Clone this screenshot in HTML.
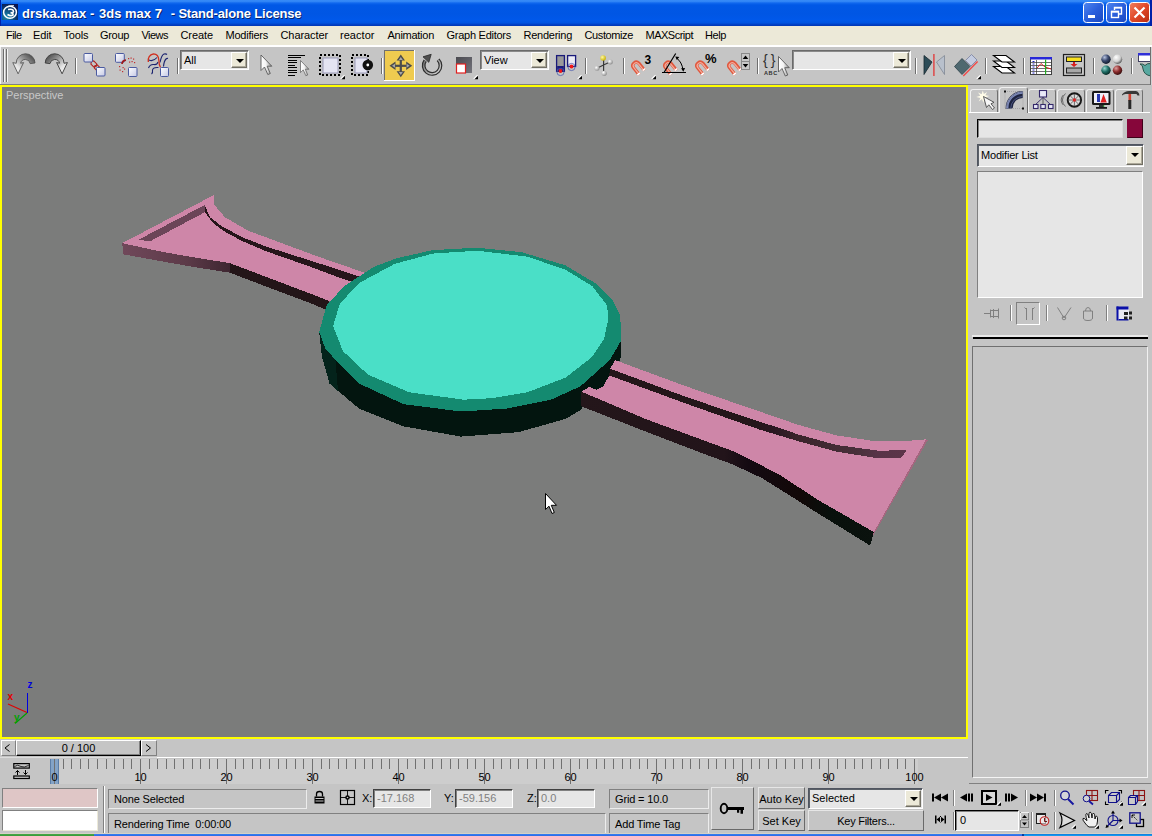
<!DOCTYPE html>
<html><head><meta charset="utf-8"><title>drska.max - 3ds max 7</title>
<style>
*{box-sizing:border-box;margin:0;padding:0}
html,body{width:1152px;height:836px;overflow:hidden;background:#c5c5c5;font-family:"Liberation Sans",sans-serif;font-size:11px;color:#000}
.abs{position:absolute}
#title{position:absolute;left:0;top:0;width:1152px;height:26px;background:linear-gradient(to bottom,#2f84f5 0,#3a8ef8 1px,#1068ee 3px,#0058e6 5px,#0056e4 14px,#0058ea 20px,#0054e0 23px,#0044cc 24px,#0036b4 26px)}
#title .t{position:absolute;left:22px;top:6px;font-weight:bold;font-size:13px;color:#fff;white-space:pre;text-shadow:1px 1px 0 #0a246a}
#menu{position:absolute;left:0;top:26px;width:1152px;height:19px;background:#ece9d8}
#menu span{position:absolute;top:3px;white-space:nowrap;font-size:11px}
#toolbar{position:absolute;left:0;top:45px;width:1152px;height:40px;background:#c5c5c5;border-top:2px solid #fff}
#vp{position:absolute;left:0;top:85px;width:968px;height:654px;background:#7b7c7b;border:2px solid #ffff00}
#vp .lbl{position:absolute;left:4px;top:2px;color:#c8c8c8;font-size:11px}
#panel{position:absolute;left:969px;top:85px;width:183px;height:700px;background:#c5c5c5}
.dd{position:absolute;height:20px;background:#e6e6e6;border:1px solid;border-color:#6a6a6a #fff #fff #6a6a6a;box-shadow:inset 1px 1px 0 #8a8a8a}
.dd .tx{position:absolute;left:3px;top:3px;font-size:11px;white-space:nowrap}
.dd .ar{position:absolute;right:1px;top:1px;bottom:1px;width:16px;background:#ece9d8;border:1px solid;border-color:#fff #716f64 #716f64 #fff;box-shadow:inset -1px -1px 0 #aca899}
.dd .ar:after{content:"";position:absolute;left:4px;top:6px;border:4px solid transparent;border-top:4px solid #000;border-bottom:0}
.tt{position:absolute;white-space:nowrap;line-height:1}
.fld{position:absolute;background:#c5c5c5;border:1px solid;border-color:#808080 #ececec #ececec #808080}
.fld .tx{position:absolute;left:5px;top:3px;font-size:11px;white-space:nowrap;letter-spacing:-0.15px}
.inp{position:absolute;background:#e6e6e6;border:1px solid;border-color:#404040 #fff #fff #404040;box-shadow:inset 1px 1px 0 #808080}
.inp .tx{position:absolute;left:3px;top:2px;font-size:11px;color:#808080;white-space:nowrap}
.btn{position:absolute;background:#c5c5c5;border:1px solid;border-color:#e6e6e6 #6a6a6a #6a6a6a #e6e6e6;text-align:center;font-size:11px;white-space:nowrap}
.tab{position:absolute;top:89px;width:28px;height:23px;border-left:1px solid #f0f0f0;border-top:1px solid #f0f0f0;border-right:1px solid #707070;border-radius:3px 3px 0 0;background:#c5c5c5}
.tab.sel{top:87px;height:26px;width:29px}
</style></head><body>
<div id="title"><div class="t">drska.max - </div><div class="t" style="left:99px">3ds max 7</div><div class="t" style="left:170.8px;letter-spacing:-0.18px">- Stand-alone License</div></div>
<div id="menu">
<span style="left:6px;letter-spacing:-0.56px">File</span><span style="left:33px;letter-spacing:-0.12px">Edit</span><span style="left:63.5px;letter-spacing:-0.14px">Tools</span><span style="left:100px;letter-spacing:-0.32px">Group</span><span style="left:141.5px;letter-spacing:-0.53px">Views</span><span style="left:180.5px;letter-spacing:-0.09px">Create</span><span style="left:225.5px;letter-spacing:-0.24px">Modifiers</span><span style="left:280.5px;letter-spacing:-0.09px">Character</span><span style="left:340px;letter-spacing:0.04px">reactor</span><span style="left:387.5px;letter-spacing:-0.27px">Animation</span><span style="left:446.5px;letter-spacing:-0.26px">Graph Editors</span><span style="left:523.5px;letter-spacing:-0.25px">Rendering</span><span style="left:584.5px;letter-spacing:-0.39px">Customize</span><span style="left:645.5px;letter-spacing:-0.50px">MAXScript</span><span style="left:705px;letter-spacing:-0.41px">Help</span>
</div>
<div id="toolbar"></div>
<div class="dd" style="left:180px;top:50px;width:69px"><div class="tx">All</div><div class="ar"></div></div>
<div class="dd" style="left:480px;top:50px;width:69px"><div class="tx">View</div><div class="ar"></div></div>
<div class="dd" style="left:792px;top:50px;width:119px"><div class="ar"></div></div>
<div class="tt" style="left:644.5px;top:54px;font-weight:bold;font-size:12px">3</div>
<div class="tt" style="left:705px;top:52px;font-weight:bold;font-size:13px">%</div>
<div class="tt" style="left:763px;top:53px;font-size:14px;letter-spacing:3px;color:#303030">{}</div>
<div class="tt" style="left:764px;top:71px;font-size:5.5px;font-weight:bold;letter-spacing:0.6px;color:#303030">ABC</div>
<div id="vp"><div class="lbl">Perspective</div></div>
<div id="panel"></div>
<svg class="abs" style="left:0;top:0" width="1152" height="90" viewBox="0 0 1152 90">
<defs>
<linearGradient id="gArrow" x1="1" y1="0" x2="0" y2="1"><stop offset="0" stop-color="#303030"/><stop offset="0.35" stop-color="#8a8a8a"/><stop offset="0.7" stop-color="#e4e4e4"/><stop offset="1" stop-color="#ffffff"/></linearGradient>
<linearGradient id="gArrowR" x1="0" y1="0" x2="1" y2="1"><stop offset="0" stop-color="#303030"/><stop offset="0.35" stop-color="#8a8a8a"/><stop offset="0.7" stop-color="#e4e4e4"/><stop offset="1" stop-color="#ffffff"/></linearGradient>
<linearGradient id="gSq" x1="0" y1="0" x2="1" y2="1"><stop offset="0" stop-color="#ffffff"/><stop offset="1" stop-color="#c4c8e4"/></linearGradient>
<linearGradient id="gMag" x1="0" y1="0" x2="1" y2="1"><stop offset="0" stop-color="#e8452a"/><stop offset="1" stop-color="#f2a090"/></linearGradient>
<linearGradient id="gCur" x1="0" y1="0" x2="1" y2="0"><stop offset="0" stop-color="#ffffff"/><stop offset="0.45" stop-color="#f4f4f4"/><stop offset="1" stop-color="#8a8a8a"/></linearGradient>
<linearGradient id="gRot" gradientUnits="userSpaceOnUse" x1="423" y1="57" x2="441" y2="75"><stop offset="0" stop-color="#6a6a6a"/><stop offset="0.5" stop-color="#a0a0a0"/><stop offset="1" stop-color="#e0e0e0"/></linearGradient>
<linearGradient id="gScl" x1="0" y1="0" x2="1" y2="1"><stop offset="0" stop-color="#4a4a50"/><stop offset="1" stop-color="#74747c"/></linearGradient>
<radialGradient id="gBall" cx="0.35" cy="0.35" r="0.7"><stop offset="0" stop-color="#ffffff"/><stop offset="1" stop-color="#8c8c8c"/></radialGradient>
<radialGradient id="gBallY" cx="0.35" cy="0.35" r="0.7"><stop offset="0" stop-color="#fff8a0"/><stop offset="1" stop-color="#c8b000"/></radialGradient>
<radialGradient id="gS1" cx="0.35" cy="0.3" r="0.75"><stop offset="0" stop-color="#b8c4e0"/><stop offset="0.5" stop-color="#3c4a70"/><stop offset="1" stop-color="#101828"/></radialGradient>
<radialGradient id="gS2" cx="0.35" cy="0.3" r="0.75"><stop offset="0" stop-color="#ffffff"/><stop offset="0.6" stop-color="#d0d0d0"/><stop offset="1" stop-color="#505050"/></radialGradient>
<radialGradient id="gS3" cx="0.35" cy="0.3" r="0.75"><stop offset="0" stop-color="#9ad8d0"/><stop offset="0.5" stop-color="#207068"/><stop offset="1" stop-color="#062420"/></radialGradient>
<radialGradient id="gS4" cx="0.35" cy="0.3" r="0.75"><stop offset="0" stop-color="#e0a0a0"/><stop offset="0.5" stop-color="#903030"/><stop offset="1" stop-color="#300808"/></radialGradient>
<g id="magnet"><path d="M9.1 14.6 L3.4 7.6 A3.5 3.5 0 0 1 8.8 3.2 L14.5 10.2" fill="none" stroke="#e0583e" stroke-width="3.4"/><path d="M8.6 13.6 L3.9 7.6 A2.9 2.9 0 0 1 8.6 3.9 L13.4 9.8" fill="none" stroke="#f6ac9c" stroke-width="1.2"/><path d="M8.1 13.4 L9.1 14.6 M13.5 9 L14.5 10.2" fill="none" stroke="#ffffff" stroke-width="3.4"/></g>
<g id="fly"><path d="M4 0.200 V3.800 H0.400 Z" fill="#000"/><path d="M-0.300 3.400 L3.500 -0.400" fill="none" stroke="#fff" stroke-width="1.100"/></g>
<g id="cursor"><path d="M0 0 L0 15.5 L3.5 12 L6.8 19.5 L9.3 18.5 L6.2 11.2 L10.8 11.2 Z" fill="url(#gCur)" stroke="#5a5a5a" stroke-width="0.9"/></g>
</defs>
<!-- gripper -->
<rect x="3" y="49" width="1" height="33" fill="#6e6e6e"/><rect x="4" y="49" width="1" height="33" fill="#f4f4f4"/>
<rect x="6" y="49" width="1" height="33" fill="#6e6e6e"/><rect x="7" y="49" width="1" height="33" fill="#f4f4f4"/>
<!-- undo -->
<path d="M18.1 73.8 L12.8 62.6 L16.2 63.3 A9.4 9.4 0 0 1 35 63 L30.2 63.6 A4.9 4.9 0 0 0 20.6 63.2 L23.6 62.6 Z" fill="url(#gArrow)" stroke="#4a4a4a" stroke-width="0.8"/>
<!-- redo -->
<path d="M62.1 73.8 L67.4 62.6 L64 63.3 A9.4 9.4 0 0 0 45.2 63 L50 63.6 A4.9 4.9 0 0 1 59.6 63.2 L56.6 62.6 Z" fill="url(#gArrowR)" stroke="#3a3a3a" stroke-width="0.9"/>
<g fill="#fff" stroke="none">
<rect x="75" y="58" width="1" height="16" fill="#6e6e6e"/><rect x="76" y="58" width="1" height="16"/>
<rect x="177" y="58" width="1" height="16" fill="#6e6e6e"/><rect x="178" y="58" width="1" height="16"/>
<rect x="381" y="58" width="1" height="16" fill="#6e6e6e"/><rect x="382" y="58" width="1" height="16"/>
<rect x="585" y="58" width="1" height="16" fill="#6e6e6e"/><rect x="586" y="58" width="1" height="16"/>
<rect x="623" y="58" width="1" height="16" fill="#6e6e6e"/><rect x="624" y="58" width="1" height="16"/>
<rect x="757" y="58" width="1" height="16" fill="#6e6e6e"/><rect x="758" y="58" width="1" height="16"/>
<rect x="915" y="58" width="1" height="16" fill="#6e6e6e"/><rect x="916" y="58" width="1" height="16"/>
<rect x="985" y="58" width="1" height="16" fill="#6e6e6e"/><rect x="986" y="58" width="1" height="16"/>
<rect x="1023" y="58" width="1" height="16" fill="#6e6e6e"/><rect x="1024" y="58" width="1" height="16"/>
<rect x="1093" y="58" width="1" height="16" fill="#6e6e6e"/><rect x="1094" y="58" width="1" height="16"/>
<rect x="1131" y="58" width="1" height="16" fill="#6e6e6e"/><rect x="1132" y="58" width="1" height="16"/>
</g>
<!-- link -->
<path d="M91.5 61.5 l2.2 -0.6 3 3 -0.6 2.6 -2.4 0.4 -2.8 -2.8 z M95 65.5 l2.2 -0.6 3 3 -0.6 2.6 -2.4 0.4 -2.8 -2.8 z" fill="none" stroke="#b02020" stroke-width="1.1"/>
<rect x="84" y="53.5" width="8.5" height="8.5" rx="1" fill="url(#gSq)" stroke="#4a5aa0" stroke-width="1"/>
<rect x="96.5" y="67.5" width="8.5" height="8.5" rx="1" fill="url(#gSq)" stroke="#4a5aa0" stroke-width="1"/>
<!-- unlink -->
<rect x="115.5" y="53.5" width="8.8" height="8.8" rx="1" fill="url(#gSq)" stroke="#4a5aa0" stroke-width="1"/>
<rect x="128.5" y="67.5" width="8.5" height="9" rx="1" fill="url(#gSq)" stroke="#4a5aa0" stroke-width="1"/>
<path d="M122 64 q0.300 -3.500 4 -3.800" fill="none" stroke="#a01818" stroke-width="1.700"/>
<g fill="#c03030"><rect x="128" y="58" width="1.2" height="1.2"/><rect x="130.5" y="57.5" width="1.2" height="1.2"/><rect x="133" y="58.5" width="1.2" height="1.2"/><rect x="129" y="61.5" width="1.2" height="1.2"/><rect x="131.5" y="61" width="1.2" height="1.2"/><rect x="134" y="62" width="1.2" height="1.2"/><rect x="119" y="66" width="1.2" height="1.2"/><rect x="122.5" y="67" width="1.2" height="1.2"/><rect x="119.5" y="69.5" width="1.2" height="1.2"/><rect x="122" y="71" width="1.2" height="1.2"/><rect x="124" y="68.5" width="1.2" height="1.2"/></g>
<!-- bind space warp -->
<g fill="none" stroke-width="1.100">
<path d="M149 60 Q153 62 157 57.500 M148.500 68 Q150 64 154 64.500 Q157 65 158 62 M151.500 74 Q153 73 152.500 70 Q153 67 158.500 67.500 M160 62.500 Q161.500 55 164 54 Q166 53.500 167 54.500 M163.500 66.500 Q164 61 166 59 Q167 58 168 58.500" stroke="#1c2470"/>
<path d="M148.300 62 Q147.500 55 153.500 53.800 Q158.500 54 158.800 60 Q159 65 160.500 67.500" stroke="#d03020" stroke-width="1.300"/>
</g>
<rect x="160.500" y="67.500" width="8" height="9" rx="1" fill="url(#gSq)" stroke="#4a5aa0" stroke-width="1"/>
<!-- select arrow -->
<use href="#cursor" x="261" y="55"/>
<!-- select by name -->
<g fill="#000" shape-rendering="crispEdges"><rect x="288" y="55" width="17" height="1"/><rect x="288" y="57" width="13" height="1"/><rect x="288" y="60" width="9" height="1"/><rect x="288" y="62" width="9" height="1"/><rect x="288" y="65" width="7" height="1"/><rect x="288" y="67" width="9" height="1"/><rect x="288" y="70" width="9" height="1"/><rect x="288" y="72" width="9" height="1"/><rect x="288" y="75" width="7" height="1"/></g>
<use href="#cursor" x="300.500" y="60.500" transform="translate(300.5 60.500) scale(0.78) translate(-300.5 -60.500)"/>
<!-- rect region -->
<rect x="320" y="55" width="20" height="20" fill="none" stroke="#000" stroke-width="2" stroke-dasharray="2 2" shape-rendering="crispEdges"/>
<rect x="323" y="58" width="15" height="15" fill="#e4e4f2" stroke="#9a9ab8" stroke-width="1"/>
<use href="#fly" x="341" y="75.500"/>
<!-- window crossing -->
<rect x="352" y="55" width="16" height="20" fill="none" stroke="#000" stroke-width="2" stroke-dasharray="2 2" shape-rendering="crispEdges"/>
<rect x="355" y="58" width="12" height="15" fill="#e4e4f2" stroke="#9a9ab8" stroke-width="1"/>
<circle cx="367.800" cy="65" r="5.300" fill="#111"/><circle cx="367.800" cy="65" r="1.400" fill="#fff"/>
<!-- move button -->
<rect x="384" y="50" width="31" height="31" fill="#fff"/><rect x="384" y="50" width="30" height="30" fill="#707070"/><rect x="385" y="51" width="29" height="29" fill="#efcb50"/>
<g fill="#4c4c4c"><rect x="399.700" y="58" width="2.200" height="16"/><rect x="393" y="64.700" width="16" height="2.200"/>
<path d="M400.800 54.500 l4.200 6 h-8.400 z M400.800 77.300 l4.200 -6 h-8.400 z M389.500 65.800 l6 -4.200 v8.400 z M412.200 65.800 l-6 -4.200 v8.400 z"/></g>
<g fill="#a8a8a8"><path d="M400.800 57 l2 3 h-4 z M400.800 75 l2 -3 h-4 z M392 65.800 l3 -2 v4 z M409.600 65.800 l-3 -2 v4 z"/></g>
<!-- rotate -->
<path d="M425.200 60.700 A8.400 8.400 0 1 0 438.100 59.700" fill="none" stroke="#2e2e2e" stroke-width="3.800"/>
<path d="M425.200 60.700 A8.400 8.400 0 1 0 438.100 59.700" fill="none" stroke="url(#gRot)" stroke-width="1.400"/>
<path d="M431.200 54.300 L423 56.800 L428.800 62.300 Z" fill="#505050" stroke="#2a2a2a" stroke-width="0.800"/>
<!-- scale -->
<rect x="456" y="57" width="16" height="16" fill="url(#gScl)"/>
<rect x="456.500" y="64" width="9" height="9" fill="#fff" stroke="#e02020" stroke-width="1.200"/>
<use href="#fly" x="474" y="75.500"/>
<!-- pivot -->
<rect x="556.600" y="55.600" width="7.800" height="15.800" fill="#9a9a9a" stroke="#1a1a7a" stroke-width="1.300"/><rect x="557.200" y="66" width="6.600" height="5.500" fill="#1a1a7a"/>
<circle cx="560.500" cy="72" r="3.600" fill="none" stroke="#5060b0" stroke-width="0.800"/><circle cx="560.500" cy="71" r="1.900" fill="#f01818"/>
<rect x="567.600" y="55.600" width="8" height="10.800" fill="#ececf4" stroke="#1a1a7a" stroke-width="1.300"/>
<circle cx="571.500" cy="67" r="3.600" fill="none" stroke="#5060b0" stroke-width="0.800"/><circle cx="571.500" cy="66.500" r="1.900" fill="#f01818"/>
<use href="#fly" x="578" y="75.500"/>
<!-- manipulate -->
<path d="M603.600 59 V72 M597.500 68 L603.500 65 L610 62" stroke="#3a3a3a" stroke-width="1.200" fill="none"/>
<circle cx="603.100" cy="58" r="2.800" fill="url(#gBallY)"/><circle cx="597" cy="68.300" r="2.500" fill="url(#gBall)"/><circle cx="610.300" cy="61.900" r="2.500" fill="url(#gBall)"/><circle cx="604.200" cy="73.300" r="2.600" fill="url(#gBall)"/>
<!-- magnets -->
<use href="#magnet" x="630" y="60"/><use href="#magnet" x="662" y="60"/><use href="#magnet" x="694" y="60"/><use href="#magnet" x="726" y="60"/>
<use href="#fly" x="652" y="75.500"/>
<!-- angle -->
<path d="M662 72.500 H686 M664 72.500 L675.700 53.500" stroke="#000" stroke-width="1.200" fill="none"/>
<path d="M676.500 58 Q682 62 683 70" stroke="#000" stroke-width="1" fill="none"/><path d="M675.300 56.500 l4 0.500 -2.500 3 z M683.300 71.800 l-2.200 -3.600 4 -0.300 z" fill="#000"/>
<!-- spinner -->
<rect x="741" y="53" width="9" height="17" fill="#8a8a8a"/><rect x="742" y="54" width="7" height="7" fill="#c8c8c8"/><rect x="742" y="62" width="7" height="7" fill="#c8c8c8"/>
<path d="M745.500 55.500 l2.800 3.500 h-5.600 z M745.500 67.500 l2.800 -3.500 h-5.600 z" fill="#000"/>
<!-- named sel cursor -->
<use href="#cursor" x="778.500" y="56.500"/>
<!-- mirror -->
<path d="M924 55.500 V74.500 L932 62 Z" fill="#2c4c58" stroke="#182830" stroke-width="0.800"/>
<path d="M944.500 55.500 V74.500 L936.500 62 Z" fill="#b8c0cc" stroke="#808894" stroke-width="0.800"/>
<rect x="933.200" y="54" width="1.400" height="22" fill="#e04040"/>
<!-- align -->
<path d="M962 58.500 L970 66.500 L962 74.500 L954.500 66.500 Z" fill="#4e6870" stroke="#2c4048" stroke-width="0.800"/>
<path d="M971.500 54.500 L977 60 L971 66 L965.500 60.500 Z" fill="#c4cce0" stroke="#7880a0" stroke-width="0.800"/>
<path d="M963.300 76 L977.600 61.500" stroke="#f04848" stroke-width="1.400"/>
<use href="#fly" x="977" y="75.500"/>
<!-- layers -->
<g fill="#fff" stroke="#000" stroke-width="1.100" stroke-linejoin="miter"><path d="M993.500 66.500 H1006 L1014.500 73 H1002 Z"/><path d="M993.500 61 H1006 L1014.500 67.500 H1002 Z"/><path d="M993.500 55.500 H1006 L1014.500 62 H1002 Z"/></g>
<!-- curve editor -->
<rect x="1030.500" y="57.500" width="21" height="17" fill="#fff" stroke="#404040" stroke-width="1"/>
<rect x="1030" y="57" width="22" height="2.500" fill="#2828d8"/>
<path d="M1036.500 60 V74 M1031 62.500 H1051 M1031 65.500 H1051 M1031 68.500 H1051 M1031 71.500 H1051" stroke="#303030" stroke-width="0.700" fill="none"/>
<path d="M1032.500 61.500 h2 M1032.500 64 h2 M1032.500 67 h2 M1032.500 70 h2 M1032.500 73 h2" stroke="#2020c0" stroke-width="1"/>
<path d="M1037 68 L1041 63.500 L1045 67 L1051 69" stroke="#d02020" stroke-width="1" fill="none"/>
<rect x="1045" y="59.500" width="1.200" height="15" fill="#20b020"/>
<!-- schematic -->
<rect x="1063.500" y="54.500" width="21" height="21" fill="#c8c8c8" stroke="#202020" stroke-width="1.200"/>
<rect x="1066.500" y="57" width="15" height="4.500" fill="#f8e020" stroke="#202020" stroke-width="1"/>
<rect x="1066.500" y="68" width="15" height="5" fill="#a8a8a8" stroke="#202020" stroke-width="1"/>
<path d="M1073 62 h2 v2 h2.500 l-3.500 3 -3.500 -3 h2.500 z" fill="#d82020"/>
<!-- material editor -->
<circle cx="1106" cy="59.200" r="4.700" fill="url(#gS1)"/><circle cx="1117.500" cy="59.200" r="4.700" fill="url(#gS2)"/><circle cx="1106" cy="70.200" r="4.700" fill="url(#gS3)"/><circle cx="1117.500" cy="70.200" r="4.700" fill="url(#gS4)"/>
<!-- render scene -->
<rect x="1138.500" y="53.500" width="14" height="8" fill="#fff" stroke="#404060" stroke-width="1"/><rect x="1138" y="53" width="14" height="2.500" fill="#3030d8"/>
<path d="M1140 64 q3 1 3 5 q1 6 8 7 V63.500 q-4 -0.500 -6 2 q-2 -2 -5 -1.500 z" fill="#58a8a0" stroke="#204840" stroke-width="0.900"/>
</svg>
<svg class="abs" style="left:0;top:0" width="1152" height="836" viewBox="0 0 1152 836" shape-rendering="crispEdges">
<defs><linearGradient id="gSide" x1="0" y1="0" x2="1" y2="0"><stop offset="0" stop-color="#70485a"/><stop offset="0.6" stop-color="#5c3a48"/><stop offset="1" stop-color="#3e2631"/></linearGradient><linearGradient id="gGrv" gradientUnits="userSpaceOnUse" x1="605" y1="0" x2="906" y2="0"><stop offset="0" stop-color="#24161a"/><stop offset="0.5" stop-color="#24161a"/><stop offset="0.56" stop-color="#2a1822"/><stop offset="0.64" stop-color="#3a242b"/><stop offset="0.84" stop-color="#48303a"/><stop offset="0.9" stop-color="#573347"/><stop offset="1" stop-color="#5c3449"/></linearGradient><linearGradient id="gRS" gradientUnits="userSpaceOnUse" x1="575" y1="0" x2="874" y2="0"><stop offset="0" stop-color="#24161a"/><stop offset="0.5" stop-color="#22141a"/><stop offset="0.58" stop-color="#140a12"/><stop offset="0.75" stop-color="#120808"/><stop offset="0.85" stop-color="#08100c"/><stop offset="1" stop-color="#0a120e"/></linearGradient></defs>
<!-- left handle -->
<g>
<polygon fill="url(#gSide)" points="122.2,243.2 162.1,251.8 196.8,257.9 229.8,263.1 229.8,272.7 196.8,267.5 162.1,261.4 123.5,254.4"/>
<polygon fill="#231518" points="229.8,263.1 266.3,277 310,293.5 329,301 329,311 310,303 266.3,286.6 229.8,272.7"/>
<polygon fill="#ce86a8" points="122.2,243.2 213.8,195.1 214.2,204.1 215.9,206.7 224.9,217.2 247.9,230.6 276.6,241.2 314.9,255.5 364.6,272.7 370,275 340,306 329,301 310,293.5 266.3,277 229.8,263.1 196.8,257.9 162.1,251.8"/>
<polygon fill="#6b4558" points="138.6,239.7 204.6,205 205.5,211.9 149.9,241.4"/>
<polygon fill="#26151a" points="204.6,205 205.1,205.8 209.8,217.1 221.1,225.8 241.9,237.1 266.3,246.6 310,260.5 343,271 362,277.5 355,283 343,279 310,266.6 266.3,251.3 241.9,240.9 222.8,230.5 212.4,222.3 205.5,212.8"/>
</g>
<!-- disc side -->
<polygon fill="#03150f" points="319.2,331.8 322,357 329.5,383.5 359,408.6 403.3,426.3 460.9,436.6 518.4,432.2 565.6,418.9 580.4,410 620.5,358 621.1,340.7 470,300"/>
<polygon fill="#04231b" points="319.2,331.8 322,357 329.5,383.5 338,391 335.4,359.9 325.1,348.1"/>
<!-- right handle -->
<g>
<polygon fill="url(#gRS)" points="581.5,391.7 646.6,419.4 704,440.5 732.7,451 761.4,465.4 780,475 817.4,499.6 873.9,532.1 870.1,545.5 817.4,513 780,489.3 761.4,477.8 732.7,464.4 704,453.9 646.6,431.9 580.5,406"/>
<polygon fill="#ce86a8" points="600,357 615,360.1 684.9,385.9 780,418.5 798.3,424.9 836.6,435.4 874.9,441.2 903.6,441.2 926.2,439.3 873.9,532.1 817.4,499.6 780,475 761.4,465.4 732.7,451 704,440.5 646.6,419.4 581.5,391.7 590,386"/>
<polygon fill="url(#gGrv)" points="605,366.8 610.2,368.7 684.9,396.5 760,422 780,428 798.3,434.5 836.6,445 878.7,450.7 906.5,450.2 900.8,458.4 878.7,458.4 836.6,451.7 798.3,441.2 780,435.7 760,429.7 684.9,403.2 609.2,375.4 604,373.5"/>
<polygon fill="#a5667f" points="926.2,439.3 927.6,440.5 872.8,536 870.1,545.5 873.9,532.1"/>
</g>
<!-- disc dark over handle root -->
<polygon fill="#03150f" points="621.1,340.7 620.2,361 615,360.1 610.2,368.7 609.2,375.4 603.5,386 596.8,389.8 589.1,386.9 581.5,391.7 580.5,406 560,400 580.4,386.4 609.9,359.9"/>
<!-- rim -->
<polygon fill="#148a70" points="319.2,331.8 326.6,305.3 344.3,286.1 373.8,266.9 397.4,258 432.8,250.1 477.1,247.7 521.4,252.1 565.6,265.4 595.2,283.1 612.9,300.8 620.3,315.6 621.1,340.7 609.9,359.9 580.4,386.4 550.9,399.7 506.6,408.6 460.9,411.5 403.3,404.1 359,383.5 335.4,359.9 325.1,348.1"/>
<polygon fill="#4adfc7" points="333.1,325.9 339.8,303.8 359,283.1 394.5,263.9 432.8,253.6 477.1,250.7 527.3,256.6 565.6,269.8 592.2,286.1 607,305.3 608.4,318.5 604,339.2 592.2,356.9 565.6,377.6 527.3,392.3 491.9,398.2 463.8,399.7 409.2,392.3 367.9,374.6 342.8,351"/>
</svg>
<!-- command panel -->
<div class="abs" style="left:969px;top:112px;width:181px;height:1px;background:#fff"></div>
<div class="tab" style="left:970px"></div>
<div class="tab" style="left:1028px"></div>
<div class="tab" style="left:1057px"></div>
<div class="tab" style="left:1086px"></div>
<div class="tab" style="left:1115px"></div>
<div class="tab sel" style="left:999px"></div>
<div class="abs" style="left:977px;top:119px;width:146px;height:19px;background:#e6e6e6;border:1px solid;border-color:#000 #dcdcdc #dcdcdc #000;box-shadow:inset 1px 1px 0 #808080"></div>
<div class="abs" style="left:1127px;top:119px;width:16px;height:19px;background:#86063a;border:1px solid;border-color:#86063a #400018 #400018 #86063a"></div>
<div class="dd" style="left:977px;top:144px;width:167px;height:23px;border-color:#505560 #fff #fff #505560;box-shadow:inset 1px 1px 0 #5a6068"><div class="tx" style="top:4px;left:3px;letter-spacing:-0.2px">Modifier List</div><div class="ar" style="top:1px;bottom:1px;right:0;width:17px"></div></div>
<div class="abs" style="left:977px;top:171px;width:166px;height:127px;background:#e6e6e6;border:1px solid;border-color:#808080 #fff #fff #808080"></div>
<div class="abs" style="left:1016px;top:302px;width:24px;height:23px;border:1px solid;border-color:#808080 #fff #fff #808080"></div>
<div class="abs" style="left:972px;top:335px;width:176px;height:2px;background:#e8e8e8"></div>
<div class="abs" style="left:973px;top:337px;width:175px;height:2px;background:#000"></div>
<div class="abs" style="left:972px;top:346px;width:176px;height:432px;border:1px solid;border-color:#707070 #f0f0f0 #f4f4f4 #707070"></div>
<div class="abs" style="left:969px;top:783px;width:182px;height:1px;background:#808080"></div>
<svg class="abs" style="left:0;top:0" width="1152" height="340" viewBox="0 0 1152 340">
<!-- create tab: cursor w/ star -->
<g>
<path d="M982.800 90.500 l1.100 3.600 3.200 -2.200 -1.700 3.300 4 0.800 -3.900 1.200 2.300 3.400 -3.600 -1.700 -0.800 4.200 -1.400 -4 -3.300 2.300 1.800 -3.500 -4.200 -0.800 4 -1.300 -2.200 -3.300 3.500 1.700 z" fill="#fffce8"/>
<path d="M983.500 96.500 L986.500 107.500 L988.800 104.800 L992.500 109.500 L994.500 108 L991 103.800 L994 102.300 Z" fill="#f6f6f6" stroke="#4a4a4a" stroke-width="0.900"/>
</g>
<!-- modify tab: arc -->
<rect x="1005" y="91.500" width="18" height="17" fill="none" stroke="#909090" stroke-width="0.600" stroke-dasharray="1 1"/>
<rect x="1004" y="90.500" width="2" height="2" fill="#101010"/><rect x="1022" y="107.500" width="2" height="2" fill="#101010"/>
<path d="M1009.200 108.500 A13.500 13.500 0 0 1 1022.700 94.500" fill="none" stroke="#1e2440" stroke-width="7"/>
<path d="M1007.700 108.500 A15 15 0 0 1 1022.700 93" fill="none" stroke="#7c88b8" stroke-width="1.500"/>
<path d="M1006.500 108.500 A16.200 16.200 0 0 1 1022.700 91.800" fill="none" stroke="#aab4d8" stroke-width="0.700"/>
<path d="M1010.700 108.500 A12 12 0 0 1 1022.700 96.500" fill="none" stroke="#4a5480" stroke-width="1"/>
<!-- hierarchy -->
<path d="M1043 97 V104.500" stroke="#909090" stroke-width="2" fill="none"/>
<g stroke="#34286a" stroke-width="1.100" fill="#e8e8f8">
<path d="M1035.500 104.500 L1043 97.500 L1050.500 104.500" fill="none" stroke-width="0.900"/>
<rect x="1039.500" y="90.500" width="7" height="6.500"/><rect x="1033.500" y="104.500" width="4.500" height="4"/><rect x="1040.800" y="104.500" width="4.500" height="4"/><rect x="1048.500" y="104.500" width="4.500" height="4"/>
</g>
<!-- motion: wheel -->
<circle cx="1074.400" cy="100" r="6.700" fill="#dcdcdc" stroke="#181818" stroke-width="1.900"/>
<path d="M1074.400 94 V106 M1068.400 100 H1080.400 M1070.200 95.800 L1078.600 104.200 M1078.600 95.800 L1070.200 104.200" stroke="#505050" stroke-width="0.800"/>
<circle cx="1074.400" cy="100" r="1.700" fill="#e02828"/>
<path d="M1065.500 93.500 A8.500 8.500 0 0 0 1065.500 106.500 M1063.300 95 A7 7 0 0 0 1063.300 105" fill="none" stroke="#606060" stroke-width="0.900"/>
<!-- display: monitor -->
<rect x="1092" y="91" width="18.500" height="14" rx="1.500" fill="#181818"/><rect x="1094" y="93" width="14.500" height="10" fill="#f0f0f8"/>
<rect x="1097" y="94" width="3" height="8" fill="#2838b0"/><path d="M1103.500 94 L1106.800 102.500 H1100.500 Z" fill="#e02020"/>
<rect x="1099" y="105" width="5" height="2" fill="#303030"/><rect x="1096" y="107" width="11" height="1.800" fill="#181818"/><rect x="1103" y="105.500" width="1.500" height="1" fill="#30d030"/>
<!-- utilities: hammer -->
<path d="M1122 94.500 q3 -4 8 -3.500 h6 q2 0 3 2.500 l0.500 2 h-2 l-1 -1.500 h-11 q-2 0 -3.500 1.500 z" fill="#383838"/>
<rect x="1128.500" y="94" width="2.600" height="7" fill="#d04030"/><rect x="1128.300" y="100" width="3" height="9" fill="#282828"/>
<!-- stack buttons -->
<g stroke="#808080" fill="none" stroke-width="1">
<path d="M984 313.500 H990.500 M990.500 309.500 V317.500 M990.500 310.500 H998.500 V316.500 H990.500 M993.500 309 V318 M998.500 308.500 V318.500"/>
<path d="M1026.500 308 V320 M1032.500 308 V320 M1024.500 307.500 L1026.500 309.500 M1034.500 307.500 L1032.500 309.500"/>
<path d="M1057.500 307.500 L1064 318 L1071 307.500"/><circle cx="1064" cy="318" r="1.800"/>
<path d="M1083.500 311 H1092.500 V318 Q1092.500 320.500 1088 320.500 Q1083.500 320.500 1083.500 318 Z M1085.500 311 Q1085.500 307.500 1088 307.500 Q1090.500 307.500 1090.500 311"/>
</g>
<g fill="#808080"><rect x="1010" y="305" width="1" height="16"/><rect x="1046" y="305" width="1" height="16"/><rect x="1106" y="305" width="1" height="16"/></g>
<g fill="#fff"><rect x="1011" y="305" width="1" height="16"/><rect x="1047" y="305" width="1" height="16"/><rect x="1107" y="305" width="1" height="16"/></g>
<!-- configure -->
<rect x="1117" y="307" width="12" height="13" fill="#e8e8f0"/><rect x="1116.500" y="306.500" width="12" height="3" fill="#0a10a8"/><rect x="1116.500" y="306.500" width="2" height="14" fill="#0a10a8"/>
<rect x="1118.500" y="319" width="10" height="1.500" fill="#0a10a8"/>
<g fill="#202020"><rect x="1124" y="312" width="4" height="3"/><rect x="1129" y="311.500" width="3" height="3"/><rect x="1124" y="316.500" width="3.500" height="3"/><rect x="1129" y="316.500" width="3" height="3"/></g>
</svg>
<div class="abs" style="left:0;top:47px;width:1px;height:37px;background:#f4f4f4"></div>
<!-- toolbar bottom line -->
<div class="abs" style="left:0;top:84px;width:1150px;height:1px;background:#808080"></div>
<!-- time slider -->
<div class="btn" style="left:1px;top:740px;width:15px;height:16px;border-color:#fff #808080 #808080 #fff"></div>
<div class="btn" style="left:141px;top:740px;width:16px;height:16px;border-color:#fff #808080 #808080 #fff"></div>
<div class="abs" style="left:16px;top:740px;width:125px;height:16px;background:#c5c5c5;border:1px solid;border-color:#fff #000 #000 #fff;box-shadow:inset -1px -1px 0 #808080;text-align:center;font-size:11px;line-height:14px">0 / 100</div>
<div class="abs" style="left:157px;top:757px;width:811px;height:1px;background:#fff"></div>
<div class="abs" style="left:0;top:757px;width:157px;height:1px;background:#dcdcdc"></div>
<!-- track bar -->
<div class="abs" style="left:50px;top:759px;width:868px;height:25px;background:#cdcdcd"></div>
<div class="abs" style="left:50px;top:759px;width:9px;height:25px;background:#83a3c7;border-left:1px solid #5c7ea8;border-right:1px solid #5c7ea8"></div>
<!-- status -->
<div class="abs" style="left:2px;top:788px;width:96px;height:20px;background:#dfc6c6;border:1px solid;border-color:#808080 #fff #fff #808080"></div>
<div class="abs" style="left:2px;top:810px;width:96px;height:21px;background:#fff;border:1px solid;border-color:#808080 #ece9d8 #ece9d8 #808080"></div>
<div class="abs" style="left:103px;top:786px;width:1px;height:48px;background:#808080"></div><div class="abs" style="left:104px;top:786px;width:1px;height:48px;background:#fff"></div>
<div class="fld" style="left:108px;top:789px;width:199px;height:20px"><div class="tx">None Selected</div></div>
<div class="fld" style="left:108px;top:813px;width:498px;height:22px"><div class="tx" style="top:4px;white-space:pre">Rendering Time  0:00:00</div></div>
<div class="tt" style="left:362px;top:793px;font-size:11px">X:</div>
<div class="inp" style="left:373px;top:789px;width:58px;height:19px"><div class="tx">-17.168</div></div>
<div class="tt" style="left:444px;top:793px;font-size:11px">Y:</div>
<div class="inp" style="left:455px;top:789px;width:58px;height:19px"><div class="tx">-59.156</div></div>
<div class="tt" style="left:527px;top:793px;font-size:11px">Z:</div>
<div class="inp" style="left:537px;top:789px;width:58px;height:19px"><div class="tx">0.0</div></div>
<div class="fld" style="left:609px;top:789px;width:100px;height:20px"><div class="tx" style="left:5px">Grid = 10.0</div></div>
<div class="fld" style="left:609px;top:813px;width:100px;height:22px"><div class="tx" style="left:5px;top:4px">Add Time Tag</div></div>
<div class="btn" style="left:711px;top:787px;width:43px;height:43px"></div>
<div class="btn" style="left:758px;top:787px;width:47px;height:22px;line-height:22px">Auto Key</div>
<div class="btn" style="left:758px;top:810px;width:47px;height:21px;line-height:20px">Set Key</div>
<div class="dd" style="left:808px;top:788px;width:115px;height:21px;border-color:#505560 #fff #fff #505560;box-shadow:inset 1px 1px 0 #5a6068"><div class="tx" style="top:3px">Selected</div><div class="ar" style="right:1px"></div></div>
<div class="btn" style="left:808px;top:810px;width:116px;height:21px;line-height:20px;letter-spacing:-0.25px">Key Filters...</div>
<div class="inp" style="left:955px;top:810px;width:64px;height:21px;border-color:#000 #fff #fff #000"><div class="tx" style="color:#000;top:3px;left:4px">0</div></div>
<!-- taskbar sliver -->
<div class="abs" style="left:0;top:833px;width:1152px;height:1px;background:#d6d1c6"></div>
<div class="abs" style="left:0;top:834px;width:1152px;height:2px;background:linear-gradient(#3a80f0,#2c6ae6)"></div>
<div class="abs" style="left:0;top:834px;width:94px;height:2px;background:linear-gradient(#48a848,#389838)"></div>
<div class="abs" style="left:1023px;top:834px;width:129px;height:2px;background:linear-gradient(#1078dc,#18a4f2)"></div><div class="abs" style="left:1022px;top:834px;width:2px;height:2px;background:#0a3c9c"></div>

<!--BSVG--><svg class="abs" style="left:0;top:736px" width="1152" height="100" viewBox="0 736 1152 100">
<g fill="#707070"><rect x="54" y="759" width="1" height="25"/><rect x="63" y="759" width="1" height="10"/><rect x="71" y="759" width="1" height="10"/><rect x="80" y="759" width="1" height="10"/><rect x="88" y="759" width="1" height="10"/><rect x="97" y="759" width="1" height="10"/><rect x="106" y="759" width="1" height="10"/><rect x="114" y="759" width="1" height="10"/><rect x="123" y="759" width="1" height="10"/><rect x="131" y="759" width="1" height="10"/><rect x="140" y="759" width="1" height="25"/><rect x="149" y="759" width="1" height="10"/><rect x="157" y="759" width="1" height="10"/><rect x="166" y="759" width="1" height="10"/><rect x="174" y="759" width="1" height="10"/><rect x="183" y="759" width="1" height="10"/><rect x="192" y="759" width="1" height="10"/><rect x="200" y="759" width="1" height="10"/><rect x="209" y="759" width="1" height="10"/><rect x="217" y="759" width="1" height="10"/><rect x="226" y="759" width="1" height="25"/><rect x="235" y="759" width="1" height="10"/><rect x="243" y="759" width="1" height="10"/><rect x="252" y="759" width="1" height="10"/><rect x="260" y="759" width="1" height="10"/><rect x="269" y="759" width="1" height="10"/><rect x="278" y="759" width="1" height="10"/><rect x="286" y="759" width="1" height="10"/><rect x="295" y="759" width="1" height="10"/><rect x="303" y="759" width="1" height="10"/><rect x="312" y="759" width="1" height="25"/><rect x="321" y="759" width="1" height="10"/><rect x="329" y="759" width="1" height="10"/><rect x="338" y="759" width="1" height="10"/><rect x="346" y="759" width="1" height="10"/><rect x="355" y="759" width="1" height="10"/><rect x="364" y="759" width="1" height="10"/><rect x="372" y="759" width="1" height="10"/><rect x="381" y="759" width="1" height="10"/><rect x="389" y="759" width="1" height="10"/><rect x="398" y="759" width="1" height="25"/><rect x="407" y="759" width="1" height="10"/><rect x="415" y="759" width="1" height="10"/><rect x="424" y="759" width="1" height="10"/><rect x="432" y="759" width="1" height="10"/><rect x="441" y="759" width="1" height="10"/><rect x="450" y="759" width="1" height="10"/><rect x="458" y="759" width="1" height="10"/><rect x="467" y="759" width="1" height="10"/><rect x="475" y="759" width="1" height="10"/><rect x="484" y="759" width="1" height="25"/><rect x="493" y="759" width="1" height="10"/><rect x="501" y="759" width="1" height="10"/><rect x="510" y="759" width="1" height="10"/><rect x="518" y="759" width="1" height="10"/><rect x="527" y="759" width="1" height="10"/><rect x="536" y="759" width="1" height="10"/><rect x="544" y="759" width="1" height="10"/><rect x="553" y="759" width="1" height="10"/><rect x="561" y="759" width="1" height="10"/><rect x="570" y="759" width="1" height="25"/><rect x="579" y="759" width="1" height="10"/><rect x="587" y="759" width="1" height="10"/><rect x="596" y="759" width="1" height="10"/><rect x="604" y="759" width="1" height="10"/><rect x="613" y="759" width="1" height="10"/><rect x="622" y="759" width="1" height="10"/><rect x="630" y="759" width="1" height="10"/><rect x="639" y="759" width="1" height="10"/><rect x="647" y="759" width="1" height="10"/><rect x="656" y="759" width="1" height="25"/><rect x="665" y="759" width="1" height="10"/><rect x="673" y="759" width="1" height="10"/><rect x="682" y="759" width="1" height="10"/><rect x="690" y="759" width="1" height="10"/><rect x="699" y="759" width="1" height="10"/><rect x="708" y="759" width="1" height="10"/><rect x="716" y="759" width="1" height="10"/><rect x="725" y="759" width="1" height="10"/><rect x="733" y="759" width="1" height="10"/><rect x="742" y="759" width="1" height="25"/><rect x="751" y="759" width="1" height="10"/><rect x="759" y="759" width="1" height="10"/><rect x="768" y="759" width="1" height="10"/><rect x="776" y="759" width="1" height="10"/><rect x="785" y="759" width="1" height="10"/><rect x="794" y="759" width="1" height="10"/><rect x="802" y="759" width="1" height="10"/><rect x="811" y="759" width="1" height="10"/><rect x="819" y="759" width="1" height="10"/><rect x="828" y="759" width="1" height="25"/><rect x="837" y="759" width="1" height="10"/><rect x="845" y="759" width="1" height="10"/><rect x="854" y="759" width="1" height="10"/><rect x="862" y="759" width="1" height="10"/><rect x="871" y="759" width="1" height="10"/><rect x="880" y="759" width="1" height="10"/><rect x="888" y="759" width="1" height="10"/><rect x="897" y="759" width="1" height="10"/><rect x="905" y="759" width="1" height="10"/><rect x="914" y="759" width="1" height="25"/></g>
<g font-family="Liberation Sans, sans-serif" font-size="11" text-anchor="middle" fill="#000"><text x="54.5" y="781">0</text><text x="140.5" y="781">10</text><text x="226.5" y="781">20</text><text x="312.5" y="781">30</text><text x="398.5" y="781">40</text><text x="484.5" y="781">50</text><text x="570.5" y="781">60</text><text x="656.5" y="781">70</text><text x="742.5" y="781">80</text><text x="828.5" y="781">90</text><text x="914.5" y="781">100</text></g>
<!-- slider arrows -->
<path d="M9.500 744.500 L5 748 L9.500 751.500 M146 744.500 L150.500 748 L146 751.500" fill="none" stroke="#000" stroke-width="1"/>
<!-- mini curve editor icon -->
<g fill="none" stroke="#000" stroke-width="1.200"><rect x="13.800" y="763.600" width="15.500" height="4.500"/><rect x="13.800" y="776" width="15.500" height="2.500"/>
<path d="M14.500 766.500 q3 -2.500 6.500 0 q3 1.500 7.500 -1" stroke-width="0.800"/>
<path d="M17.500 775 V770.500 M15.500 772.500 L17.500 770.500 L19.500 772.500 M25.500 770 V774.500 M23.500 772.500 L25.500 774.500 L27.500 772.500" stroke-width="1"/></g>
<!-- lock -->
<path d="M316.500 796.500 V794 Q316.500 791.500 319.500 791.500 Q322.500 791.500 322.500 794 V796.500" fill="none" stroke="#000" stroke-width="1.300"/>
<rect x="314.500" y="796.500" width="10" height="7" fill="#000"/><rect x="315.500" y="798" width="8" height="1" fill="#c5c5c5"/><rect x="315.500" y="800.500" width="8" height="1" fill="#c5c5c5"/>
<!-- abs/offset -->
<rect x="340.500" y="790.500" width="14" height="14" fill="none" stroke="#000" stroke-width="1.200"/>
<path d="M347.500 791 V804 M341 797.500 H354" stroke="#000" stroke-width="0.900"/><circle cx="347.500" cy="797.500" r="2.300" fill="#000"/><circle cx="347.500" cy="797.500" r="0.800" fill="#c5c5c5"/>
<!-- key -->
<ellipse cx="724" cy="808.500" rx="3.300" ry="4.700" fill="none" stroke="#000" stroke-width="1.900"/>
<path d="M727.500 807 H744 V810 H727.500 Z M737 809.500 h2.200 v3.300 h-2.200 z M740.500 809.500 h2.500 v4.200 h-2.500 z" fill="#000"/>
<!-- playback -->
<g fill="#000">
<rect x="932" y="793.500" width="2" height="8"/><path d="M941 793.500 V801.500 L934 797.500 Z M948 793.500 V801.500 L941 797.500 Z"/>
<path d="M967 793.500 V801.500 L960 797.500 Z"/><rect x="968" y="793.500" width="2" height="8"/><rect x="971" y="793.500" width="2" height="8"/>
<path d="M981 790 H997 V805 H981 Z M983 792 V803 H995 V792 Z" fill-rule="evenodd"/><path d="M986 794 V801 L992.500 797.500 Z"/>
<rect x="1005" y="793.500" width="2" height="8"/><rect x="1008" y="793.500" width="2" height="8"/><path d="M1011 793.500 V801.500 L1018 797.500 Z"/>
<path d="M1030 793.500 V801.500 L1037 797.500 Z M1037 793.500 V801.500 L1044 797.500 Z"/><rect x="1044" y="793.500" width="2" height="8"/>
<rect x="935" y="815.500" width="1.500" height="8"/><rect x="944.500" y="815.500" width="1.500" height="8"/><path d="M941 816 V823 L936.500 819.500 Z M940 816 V823 L944.500 819.500 Z"/>
</g>
<rect x="983" y="792" width="12" height="11" fill="#d8d8d8"/><path d="M986 794 V801 L992.500 797.500 Z" fill="#000"/>
<rect x="1020.500" y="812.500" width="8" height="15" fill="#c5c5c5" stroke="#808080" stroke-width="1"/><path d="M1021 812.500 H1029 M1020.500 813 V820 M1021 820.500 H1029" stroke="#f0f0f0" stroke-width="1" fill="none"/><rect x="1021" y="819.500" width="8" height="1" fill="#606060"/>
<path d="M1024.500 815 l2.500 3 h-5 z M1024.500 825.500 l2.500 -3 h-5 z" fill="#000"/>
<use href="#fly" x="997" y="802"/>
<g fill="#808080"><rect x="953" y="790" width="1" height="16"/><rect x="1025" y="790" width="1" height="16"/><rect x="1054" y="790" width="1" height="16"/><rect x="953" y="812" width="1" height="18"/><rect x="1031" y="812" width="1" height="18"/><rect x="1054" y="812" width="1" height="18"/></g>
<g fill="#fff"><rect x="954" y="790" width="1" height="16"/><rect x="1026" y="790" width="1" height="16"/><rect x="1055" y="790" width="1" height="16"/><rect x="954" y="812" width="1" height="18"/><rect x="1032" y="812" width="1" height="18"/><rect x="1055" y="812" width="1" height="18"/></g>
<!-- time config -->
<rect x="1036.500" y="813.500" width="9" height="10" fill="#e8e8e8" stroke="#202020" stroke-width="1"/><rect x="1036" y="813" width="10" height="2" fill="#202020"/>
<circle cx="1044.500" cy="821" r="4.300" fill="#f0e8e8" fill-opacity="0.600" stroke="#c02020" stroke-width="1.100"/><path d="M1044.500 818 V821.500 H1047" stroke="#600000" stroke-width="0.900" fill="none"/>
<!-- zoom -->
<circle cx="1065" cy="795.500" r="4.300" fill="#d4d4d8" stroke="#10108a" stroke-width="1.300"/><path d="M1068 799 L1073.500 804.500" stroke="#1818a0" stroke-width="2"/>
<!-- zoom all -->
<g fill="none" stroke="#8c1414" stroke-width="1.100"><rect x="1086.500" y="790.500" width="11" height="10"/><path d="M1092 790.500 V800.500 M1086.500 795.500 H1097.500"/></g>
<circle cx="1086.500" cy="798.500" r="3.300" fill="#d0d0d4" stroke="#10108a" stroke-width="1"/><path d="M1089 801 L1093 804.500" stroke="#1818a0" stroke-width="1.800"/>
<!-- zoom extents -->
<g fill="none" stroke="#000" stroke-width="1.100"><path d="M1105.500 793.500 V790.500 H1108.500 M1118.500 790.500 H1121.500 V793.500 M1105.500 801.500 V804.500 H1108.500 M1118.500 804.500 H1121.500 V801.500"/></g>
<g fill="#cacaca" stroke="#10108a" stroke-width="1.100"><path d="M1108.500 795.500 L1111.500 792.500 H1119.500 V799.500 L1116.500 802.500 H1108.500 Z"/><path d="M1108.500 795.500 H1116.500 V802.500 M1116.500 795.500 L1119.500 792.500" fill="none"/></g>
<use href="#fly" x="1119" y="802"/>
<!-- zoom extents all -->
<g fill="none" stroke="#8c1414" stroke-width="1.100"><rect x="1133.500" y="790.500" width="11" height="10"/><path d="M1139 790.500 V800.500 M1133.500 795.500 H1144.500"/></g>
<g fill="#cacaca" stroke="#10108a" stroke-width="1.100"><path d="M1128.500 797.500 L1130.500 795.500 H1137.500 V801.500 L1135.500 804.500 H1128.500 Z"/><path d="M1128.500 797.500 H1135.500 V804.500 M1135.500 797.500 L1137.500 795.500" fill="none"/></g>
<use href="#fly" x="1142" y="802"/>
<!-- fov -->
<path d="M1060 813 L1074.500 820.500 L1060 827.500 Q1064 820.500 1060 813 Z" fill="#dcdcdc" stroke="#000" stroke-width="1.200"/>
<use href="#fly" x="1072" y="825"/>
<!-- pan hand -->
<path d="M1086 820 q-2 -2.500 -3 -1.500 q-1 1 2 4.500 q2 3 4 4 h6 q2.500 -2 2.500 -6 q0.500 -4.500 -1 -5 q-1 -0.500 -1.500 3 q0 -5.500 -1.500 -6 q-1.500 0 -1.500 5 q-0.300 -6 -1.800 -6 q-1.700 0 -1.200 6 q-1 -5 -2.500 -4.500 q-1.500 0.500 0.500 7 z" fill="#f0f0f0" stroke="#000" stroke-width="0.900"/>
<use href="#fly" x="1095" y="825"/>
<!-- arc rotate -->
<g fill="none" stroke="#10108a" stroke-width="1.100"><circle cx="1113" cy="820.500" r="5"/><path d="M1113 820.500 V812 M1113 820.500 L1121 820.500 M1113 820.500 L1107 826.500"/></g>
<path d="M1113 810.500 l2 3 h-4 z M1122.500 820.500 l-3 2 v-4 z M1105.500 828 l1 -3.500 2.500 2.500 z" fill="#000"/>
<use href="#fly" x="1119" y="825"/>
<!-- min max -->
<rect x="1136.500" y="819.500" width="7" height="7" fill="none" stroke="#000" stroke-width="1.300"/><rect x="1129.800" y="812.800" width="10.400" height="10.400" fill="#c5c5c5" stroke="#10108a" stroke-width="1.300"/>
<path d="M1132 815 L1137.500 820.500" stroke="#000" stroke-width="0.900" stroke-dasharray="1.500 1" fill="none"/><path d="M1132 815 h3 M1132 815 v3" stroke="#000" stroke-width="0.900" fill="none"/>
</svg><!--/BSVG-->
<!-- window buttons, app icon, axis tripod, mouse cursor -->
<svg class="abs" style="left:0;top:0" width="1152" height="836" viewBox="0 0 1152 836">
<defs>
<linearGradient id="gWB" x1="0" y1="0" x2="1" y2="1"><stop offset="0" stop-color="#4f86f0"/><stop offset="0.5" stop-color="#2a5fdc"/><stop offset="1" stop-color="#1a48c0"/></linearGradient>
<linearGradient id="gWC" x1="0" y1="0" x2="1" y2="1"><stop offset="0" stop-color="#f08060"/><stop offset="0.5" stop-color="#e04828"/><stop offset="1" stop-color="#b82c10"/></linearGradient>
<radialGradient id="gIco" cx="0.3" cy="0.8" r="0.9"><stop offset="0" stop-color="#1c8cb0"/><stop offset="0.6" stop-color="#0c3c70"/><stop offset="1" stop-color="#0a1450"/></radialGradient>
</defs>
<rect x="0" y="0" width="1" height="26" fill="#0020a8"/><rect x="1150" y="0" width="2" height="26" fill="#0020a8"/>
<rect x="1150" y="47" width="1" height="38" fill="#707070"/><rect x="1151" y="47" width="1" height="38" fill="#d4d4d4"/>
<!-- app icon -->
<rect x="2" y="4" width="16" height="16" fill="url(#gIco)"/>
<ellipse cx="10" cy="12.200" rx="6.400" ry="6" fill="none" stroke="#fff" stroke-width="1.500"/>
<path d="M14 5.500 Q7 5 5 9" fill="none" stroke="#e8f0f8" stroke-width="1" opacity="0.800"/>
<path d="M8 9.500 Q13.500 8.500 13.500 11.500 Q13.500 13 10.500 12.600 Q13.500 13 13 15 Q11 16.500 7.500 14.500" fill="none" stroke="#fff" stroke-width="1.600"/>
<!-- min -->
<rect x="1083.500" y="2.500" width="20" height="20" rx="3" fill="url(#gWB)" stroke="#fff" stroke-width="1"/>
<rect x="1088" y="15" width="7" height="3" fill="#fff"/>
<!-- restore -->
<rect x="1106.500" y="2.500" width="20" height="20" rx="3" fill="url(#gWB)" stroke="#fff" stroke-width="1"/>
<path d="M1114.500 10 V7.500 H1121.500 V14 H1119" fill="none" stroke="#fff" stroke-width="1.400"/><rect x="1114.500" y="7" width="7" height="1.500" fill="#fff"/>
<rect x="1111.500" y="11.500" width="7" height="6" fill="none" stroke="#fff" stroke-width="1.400"/><rect x="1111" y="10.800" width="8" height="1.800" fill="#fff"/>
<!-- close -->
<rect x="1129.500" y="2.500" width="20" height="20" rx="3" fill="url(#gWC)" stroke="#fff" stroke-width="1"/>
<path d="M1134.500 7.500 L1144.500 17.500 M1144.500 7.500 L1134.500 17.500" stroke="#fff" stroke-width="2.200" fill="none"/>
<!-- axis tripod -->
<g shape-rendering="crispEdges"><path d="M27.500 693 V713" stroke="#0000e0" stroke-width="1.300"/></g>
<path d="M27 712.500 L8 704" stroke="#e00000" stroke-width="1.100"/>
<path d="M27 713 L15 723.500" stroke="#00a000" stroke-width="1.100"/>
<g font-family="Liberation Sans, sans-serif" font-weight="bold" font-size="10"><text x="27.500" y="688" fill="#0000e0">z</text><text x="7.500" y="700" fill="#e00000">x</text><text x="14" y="720.500" fill="#00a000">y</text></g>
<!-- mouse cursor -->
<path d="M545.500 493.500 V509.500 L549 506.200 L552 513.500 L554.300 512.500 L551.300 505.300 H556.500 Z" fill="#fff" stroke="#000" stroke-width="1"/>
</svg>

</body></html>
